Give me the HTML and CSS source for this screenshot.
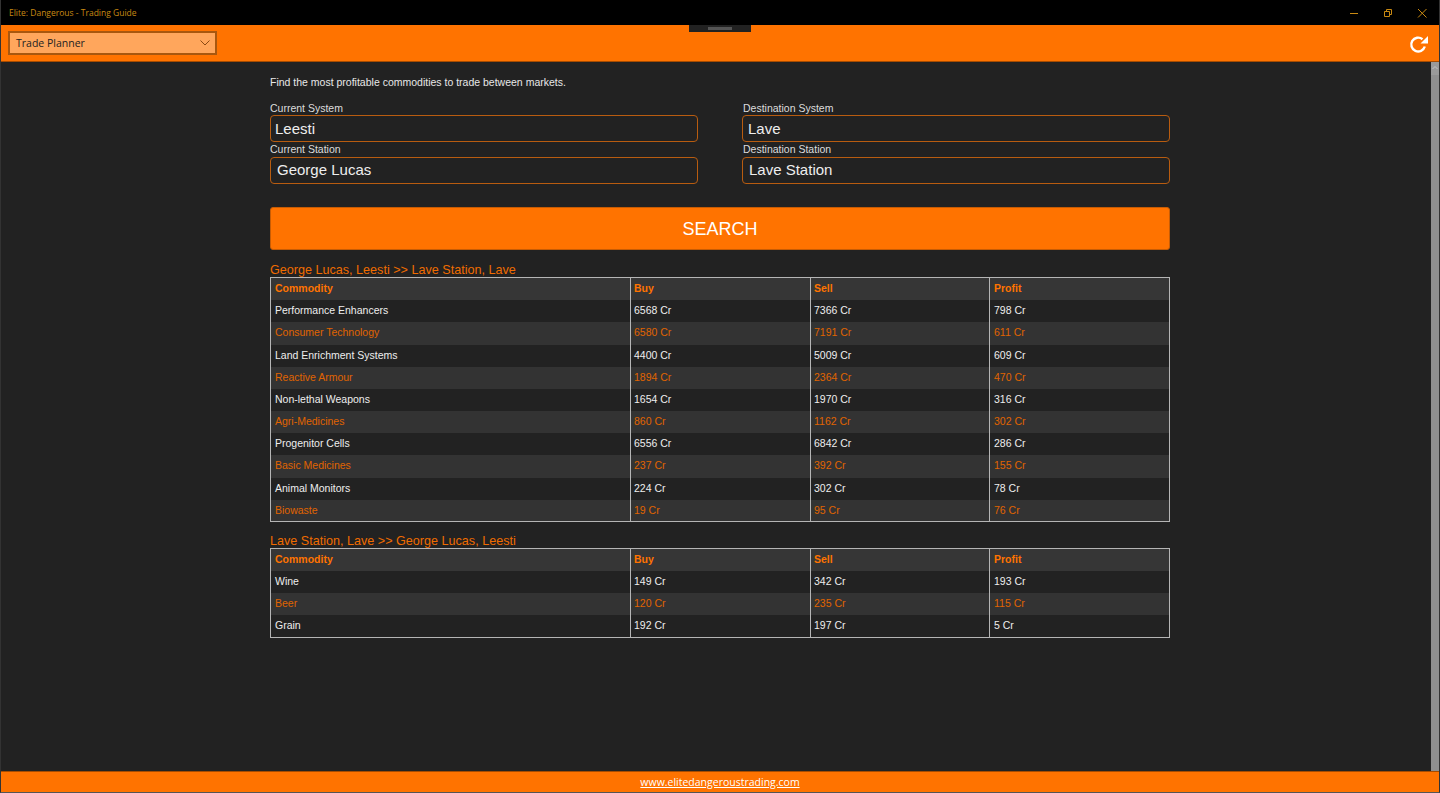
FILE: index.html
```html
<!DOCTYPE html>
<html lang="en">
<head>
<meta charset="utf-8">
<title>Elite: Dangerous - Trading Guide</title>
<link rel="stylesheet" href="styles.css">
</head>
<body>
<div class="window">
  <header class="titlebar">
    <span class="title">Elite: Dangerous - Trading Guide</span>
    <div class="controls">
      <svg class="ctl" width="34" height="24" viewBox="0 0 34 24"><path d="M13 12.500h8" stroke="#c98a12" fill="none"/></svg>
      <svg class="ctl" width="34" height="24" viewBox="0 0 34 24"><path d="M13.500 10.500h5v5h-5zM15.500 10.500v-2h5v5h-2" stroke="#c98a12" fill="none"/></svg>
      <svg class="ctl" width="34" height="24" viewBox="0 0 34 24"><path d="M13 8l8.500 8.500M21.500 8 13 16.500" stroke="#c98a12" fill="none"/></svg>
    </div>
  </header>
  <div class="toolbar">
    <div class="select">
      <span>Trade Planner</span>
      <svg width="10" height="6" viewBox="0 0 10 6"><path d="M.5.5 5 5l4.500-4.500" stroke="#8a4a14" fill="none"/></svg>
    </div>
    <div class="handle"><i></i></div>
    <svg class="refresh" width="20" height="20" viewBox="0 0 20 20">
      <path d="M15.800 11.500A6.900 6.900 0 1 1 13.500 4.200" stroke="#fff" stroke-width="2.400" fill="none"/>
      <path d="M11.500 8.500 19 8.500 19 1z" fill="#fff"/>
    </svg>
  </div>
  <div class="body">
    <main class="content">
      <div class="page">
        <p class="intro">Find the most profitable commodities to trade between markets.</p>
        <div class="form">
          <div class="col">
            <label class="lbl">Current System</label>
            <div class="field">Leesti</div>
            <label class="lbl">Current Station</label>
            <div class="field station">George Lucas</div>
          </div>
          <div class="col dest">
            <label class="lbl">Destination System</label>
            <div class="field">Lave</div>
            <label class="lbl">Destination Station</label>
            <div class="field station">Lave Station</div>
          </div>
        </div>
        <button class="search">SEARCH</button>

        <h2 class="route first">George Lucas, Leesti &gt;&gt; Lave Station, Lave</h2>
        <table class="grid">
          <colgroup><col class="c1"><col class="c2"><col class="c3"><col class="c4"></colgroup>
          <thead><tr><th>Commodity</th><th>Buy</th><th>Sell</th><th>Profit</th></tr></thead>
          <tbody>
            <tr><td>Performance Enhancers</td><td>6568 Cr</td><td>7366 Cr</td><td>798 Cr</td></tr>
            <tr><td>Consumer Technology</td><td>6580 Cr</td><td>7191 Cr</td><td>611 Cr</td></tr>
            <tr><td>Land Enrichment Systems</td><td>4400 Cr</td><td>5009 Cr</td><td>609 Cr</td></tr>
            <tr><td>Reactive Armour</td><td>1894 Cr</td><td>2364 Cr</td><td>470 Cr</td></tr>
            <tr><td>Non-lethal Weapons</td><td>1654 Cr</td><td>1970 Cr</td><td>316 Cr</td></tr>
            <tr><td>Agri-Medicines</td><td>860 Cr</td><td>1162 Cr</td><td>302 Cr</td></tr>
            <tr><td>Progenitor Cells</td><td>6556 Cr</td><td>6842 Cr</td><td>286 Cr</td></tr>
            <tr><td>Basic Medicines</td><td>237 Cr</td><td>392 Cr</td><td>155 Cr</td></tr>
            <tr><td>Animal Monitors</td><td>224 Cr</td><td>302 Cr</td><td>78 Cr</td></tr>
            <tr><td>Biowaste</td><td>19 Cr</td><td>95 Cr</td><td>76 Cr</td></tr>
          </tbody>
        </table>

        <h2 class="route">Lave Station, Lave &gt;&gt; George Lucas, Leesti</h2>
        <table class="grid">
          <colgroup><col class="c1"><col class="c2"><col class="c3"><col class="c4"></colgroup>
          <thead><tr><th>Commodity</th><th>Buy</th><th>Sell</th><th>Profit</th></tr></thead>
          <tbody>
            <tr><td>Wine</td><td>149 Cr</td><td>342 Cr</td><td>193 Cr</td></tr>
            <tr><td>Beer</td><td>120 Cr</td><td>235 Cr</td><td>115 Cr</td></tr>
            <tr><td>Grain</td><td>192 Cr</td><td>197 Cr</td><td>5 Cr</td></tr>
          </tbody>
        </table>
      </div>
    </main>
    <div class="scrollbar">
      <svg class="scroll-up" width="8" height="13" viewBox="0 0 8 13"><path d="M1.500 7 4 4.500 6.500 7" stroke="#c4c4c4" fill="none"/></svg>
    </div>
  </div>
  <footer class="footer"><a href="#">www.elitedangeroustrading.com</a></footer>
</div>
</body>
</html>
```

FILE: styles.css
```css
* { box-sizing: border-box; }
html, body { margin: 0; height: 100%; overflow: hidden; }
body { background: #222; font-family: "Liberation Sans", Arial, sans-serif; color: #fff; }

.window {
  height: 793px; display: flex; flex-direction: column;
  border-left: 1px solid #333; border-right: 1px solid #333; border-bottom: 1px solid #555;
}

.titlebar {
  height: 25px; flex: none; background: #000;
  display: flex; align-items: center; justify-content: space-between;
  padding-left: 8px;
}
.title { font-family: "Open Sans", sans-serif; font-size: 8.5px; color: #c98a12; }
.controls { display: flex; }
.ctl { display: block; }

.toolbar {
  height: 37px; flex: none; background: #ff7300;
  border-bottom: 1px solid #a84c00;
  display: flex; align-items: center; justify-content: space-between;
  padding: 0 10px 0 7px; position: relative;
}
.select {
  width: 209px; height: 24px; background: #ffa65c;
  border: 2px solid #a8570f;
  display: flex; align-items: center; justify-content: space-between;
  padding: 0 5px 0 6px;
  font-family: "Open Sans", sans-serif; font-size: 10.5px; color: #222;
}
.handle {
  position: absolute; left: 688px; top: 0;
  width: 62px; height: 7px; background: #222;
  display: flex; align-items: center; justify-content: center;
}
.handle i { display: block; width: 24px; height: 3px; background: #555; }
.refresh { display: block; margin-top: 4px; }

.body { flex: 1; display: flex; min-height: 0; }
.content { flex: 1; min-width: 0; display: flex; justify-content: center; padding-left: 8px; }
.scrollbar { width: 8px; background: #8f8f8f; }
.scroll-up { display: block; background: #9a9a9a; }
.page { width: 900px; }

.intro { margin: 14px 0 0; font-size: 10.5px; line-height: 13px; color: #e8e8e8; }
.form { display: grid; grid-template-columns: 428px 428px; column-gap: 44px; margin-top: 13px; }
.lbl { display: block; font-size: 10.5px; line-height: 13px; color: #ddd; }
.field + .lbl { margin-top: 1px; }
.dest .lbl { padding-left: 1px; }
.field {
  height: 27px; border: 1px solid #b85c10; border-radius: 4px;
  font-size: 15px; line-height: 25px; padding-left: 4px; color: #eee;
}
.dest .field { padding-left: 5px; }
.field.station { margin-top: 1px; padding-left: 6px; line-height: 24px; }
.dest .field.station { padding-left: 6px; }

.search {
  display: block; width: 900px; height: 43px; margin-top: 23px; padding: 1px 0 0;
  background: #ff7300; border: 1px solid #c75c04; border-radius: 3px; color: #fff;
  font: 18px "Liberation Sans", Arial, sans-serif;
}

.route { margin: 0; font-weight: 400; font-size: 12.600px; line-height: 14px; color: #f06c00; }
.route.first { margin-top: 13px; }
.route:not(.first) { margin-top: 13px; line-height: 13px; }

.grid {
  width: 900px; border-collapse: separate; border-spacing: 0; table-layout: fixed;
  border: 1px solid #b5b5b5; font-size: 10.5px;
}
.c1 { width: 359px; } .c2 { width: 180px; } .c3 { width: 179px; } .c4 { width: 180px; }
.grid th, .grid td { height: 22.18px; padding: 0 0 2px 3px; text-align: left; border-left: 1px solid #b5b5b5; }
.grid th:first-child, .grid td:first-child { border-left: 0; padding-left: 4px; }
.grid th:last-child, .grid td:last-child { padding-left: 4px; }
.grid th { background: #363636; color: #ff7300; font-weight: 700; }
.grid td { color: #eee; }
.grid tbody tr:last-child td { height: 21.18px; padding-bottom: 1px; }
.grid tbody tr:nth-child(even) td { background: #333; color: #e06400; }

.footer {
  height: 21px; flex: none; background: #ff7300; text-align: center;
  border-top: 1px solid #a84c00;
  font-family: "Open Sans", sans-serif; font-size: 10.5px; line-height: 20px;
}
.footer a { color: #fff; }
```
